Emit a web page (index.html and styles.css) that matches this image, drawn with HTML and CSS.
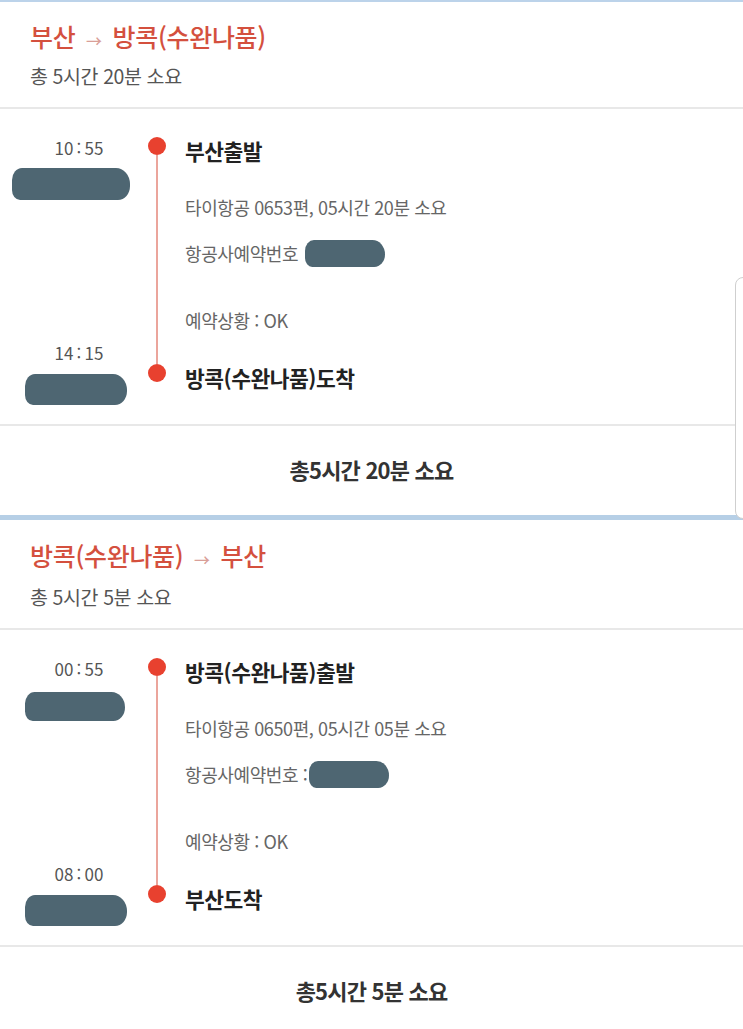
FILE: index.html
```html
<!DOCTYPE html>
<html lang="ko">
<head>
    <meta charset="UTF-8">
    <meta name="viewport" content="width=device-width, initial-scale=1.0">
    <title>항공 일정</title>
    <link rel="stylesheet" href="styles.css">
</head>
<body>
    <div class="side-tab"></div>

    <!-- 가는 편 -->
    <section class="trip">
        <div class="trip-head">
            <div class="route">부산 <span class="arrow">→</span> 방콕(수완나품)</div>
            <div class="duration">총 5시간 20분 소요</div>
        </div>

        <div class="timeline">
            <div class="times">
                <div class="time">10 : 55</div>
                <div class="blob blob-a"></div>
                <div class="time time-arrive">14 : 15</div>
                <div class="blob blob-b"></div>
            </div>
            <div class="rail">
                <span class="dot"></span>
                <span class="line"></span>
                <span class="dot"></span>
            </div>
            <div class="stops">
                <div class="stop">부산출발</div>
                <div class="detail detail-flight">타이항공 0653편, 05시간 20분 소요</div>
                <div class="detail detail-booking">항공사예약번호&nbsp;<span class="blob blob-inline"></span></div>
                <div class="detail detail-status">예약상황 : OK</div>
                <div class="stop stop-arrive">방콕(수완나품)도착</div>
            </div>
        </div>

        <div class="trip-foot">총5시간 20분 소요</div>
    </section>

    <!-- 오는 편 -->
    <section class="trip trip-return">
        <div class="trip-head">
            <div class="route">방콕(수완나품) <span class="arrow">→</span> 부산</div>
            <div class="duration">총 5시간 5분 소요</div>
        </div>

        <div class="timeline">
            <div class="times">
                <div class="time">00 : 55</div>
                <div class="blob blob-c"></div>
                <div class="time time-arrive">08 : 00</div>
                <div class="blob blob-b"></div>
            </div>
            <div class="rail">
                <span class="dot"></span>
                <span class="line"></span>
                <span class="dot"></span>
            </div>
            <div class="stops">
                <div class="stop">방콕(수완나품)출발</div>
                <div class="detail detail-flight">타이항공 0650편, 05시간 05분 소요</div>
                <div class="detail detail-booking">항공사예약번호 :<span class="blob blob-inline"></span></div>
                <div class="detail detail-status">예약상황 : OK</div>
                <div class="stop stop-arrive">부산도착</div>
            </div>
        </div>

        <div class="trip-foot">총5시간 5분 소요</div>
    </section>
</body>
</html>
```

FILE: styles.css
```css
* {
    margin: 0;
    padding: 0;
    box-sizing: border-box;
}

body, html {
    font-family: "Noto Sans CJK KR", "Noto Sans", sans-serif;
    background-color: #fff;
    color: #222;
}

body {
    border-top: 2px solid #bcd3ea;
    overflow: hidden;
}

/* floating tab on the right edge */
.side-tab {
    position: absolute;
    top: 277px;
    right: -12px;
    width: 20px;
    height: 242px;
    border: 1px solid #cfcfcf;
    border-radius: 8px;
    background-color: #fff;
}

.trip {
    border-bottom: 5px solid #b6cfe6;
}

.trip:last-child {
    border-bottom: none;
}

.trip-head {
    padding: 19px 30px 19px;
    border-bottom: 2px solid #e8e8e8;
}

.trip-return .trip-head {
    padding-top: 20px;
}

.trip-return .duration {
    margin-top: 15px;
}

.route {
    height: 30px;
    font-size: 25px;
    line-height: 30px;
    font-weight: 500;
    color: #d4503e;
    letter-spacing: -0.3px;
}

.route .arrow {
    font-size: 16px;
    line-height: 1;
    color: #d99f98;
    margin: 0 4px;
}

.duration {
    margin-top: 13px;
    font-size: 19.5px;
    line-height: 24px;
    color: #555;
    letter-spacing: -0.4px;
}

/* timeline */
.timeline {
    display: flex;
    border-bottom: 2px solid #e8e8e8;
}

.times {
    width: 148px;
    padding: 28px 0 0 10px;
    display: flex;
    flex-direction: column;
}

.time {
    text-align: center;
    font-size: 17px;
    line-height: 22px;
    color: #555;
    word-spacing: -1.5px;
}

.time-arrive {
    margin-top: 142px;
}

/* redacted marks */
.blob {
    background-color: #4e6672;
    border-radius: 10px 14px 12px 8px / 12px 16px 14px 10px;
}

.blob-a {
    margin: 9px 0 0 2px;
    width: 118px;
    height: 32px;
}

.blob-b {
    margin: 10px 0 0 15px;
    width: 102px;
    height: 31px;
}

.blob-c {
    margin: 12px 0 0 15px;
    width: 100px;
    height: 29px;
}

.blob-inline {
    width: 80px;
    height: 27px;
    margin-left: 2px;
    flex-shrink: 0;
}

.rail {
    width: 18px;
    padding: 28px 0 42px;
    display: flex;
    flex-direction: column;
    align-items: center;
}

.dot {
    width: 18px;
    height: 18px;
    border-radius: 50%;
    background-color: #e8412f;
}

.line {
    flex-grow: 1;
    width: 2px;
    background-color: #eba59c;
}

.stops {
    padding: 28px 0 32px 19px;
}

.stop {
    height: 28px;
    font-size: 21.5px;
    line-height: 28px;
    font-weight: bold;
    color: #222;
    letter-spacing: -0.5px;
}

.stop-arrive {
    margin-top: 32px;
}

.detail {
    height: 24px;
    margin-top: 22px;
    font-size: 18px;
    line-height: 24px;
    color: #666;
    letter-spacing: -0.4px;
}

.detail-booking {
    display: flex;
    align-items: center;
}

.detail-flight {
    margin-top: 30px;
}

.detail-status {
    margin-top: 43px;
}

.trip-foot {
    padding: 31px 0 34px;
    text-align: center;
    font-size: 22px;
    line-height: 24px;
    font-weight: bold;
    color: #333;
    letter-spacing: -0.8px;
}
```
